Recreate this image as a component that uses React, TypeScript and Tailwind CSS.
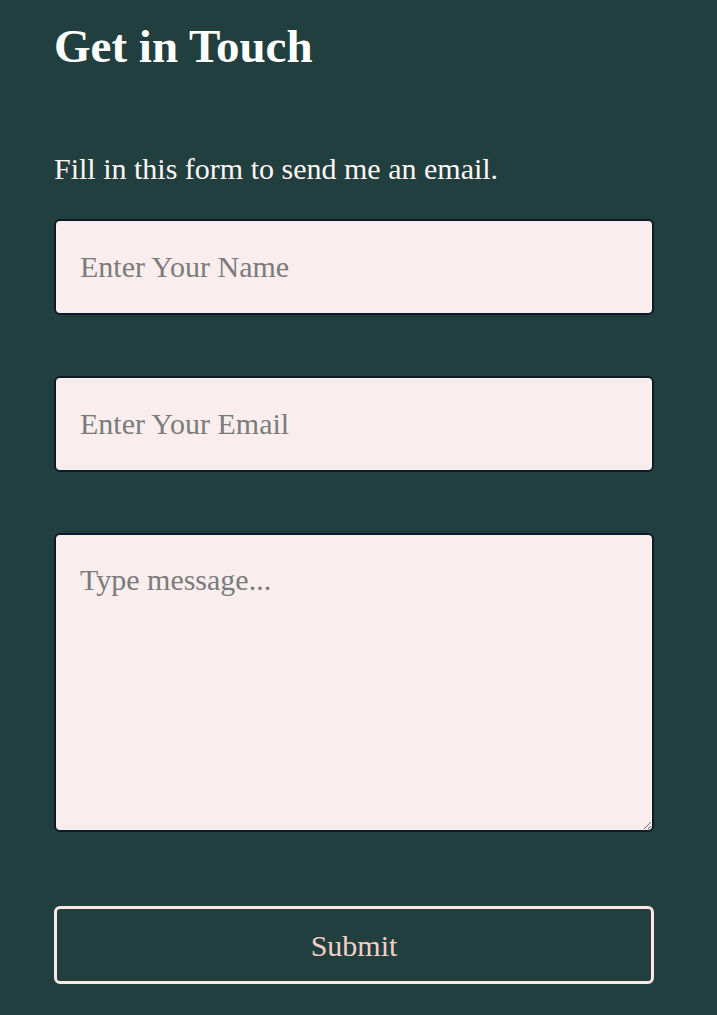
export default function App() {
  return (
    <div className="min-h-screen bg-[#213f3f] font-['Liberation_Serif',serif]">
      <div className="ml-[54px] w-[600px] pt-[14px] pb-8">
        <h1 className="text-[47px] font-bold leading-[64px] text-white">Get in Touch</h1>
        <p className="mt-[73px] text-[30px] leading-[36px] text-[#fdf6f4]">
          Fill in this form to send me an email.
        </p>
        <form className="mt-[32px] flex flex-col" onSubmit={(e) => e.preventDefault()}>
          <input
            type="text"
            placeholder="Enter Your Name"
            className="h-[96px] w-full rounded-md border-2 border-[#0e1a26] bg-[#f9eeed] px-[24px] text-[30px] text-[#333] placeholder:text-[#7b7b7b] outline-none"
          />
          <input
            type="email"
            placeholder="Enter Your Email"
            className="mt-[61px] h-[96px] w-full rounded-md border-2 border-[#0e1a26] bg-[#f9eeed] px-[24px] text-[30px] text-[#333] placeholder:text-[#7b7b7b] outline-none"
          />
          <textarea
            placeholder="Type message..."
            className="mt-[61px] h-[299px] w-full rounded-md border-2 border-[#0e1a26] bg-[#f9eeed] px-[24px] pt-[27px] text-[30px] leading-[36px] text-[#333] placeholder:text-[#7b7b7b] outline-none"
          />
          <button
            type="submit"
            className="mt-[74px] h-[78px] w-full rounded-md border-[3px] border-[#fbe7e3] text-[30px] text-[#f5cfc8]"
          >
            Submit
          </button>
        </form>
      </div>
    </div>
  );
}
